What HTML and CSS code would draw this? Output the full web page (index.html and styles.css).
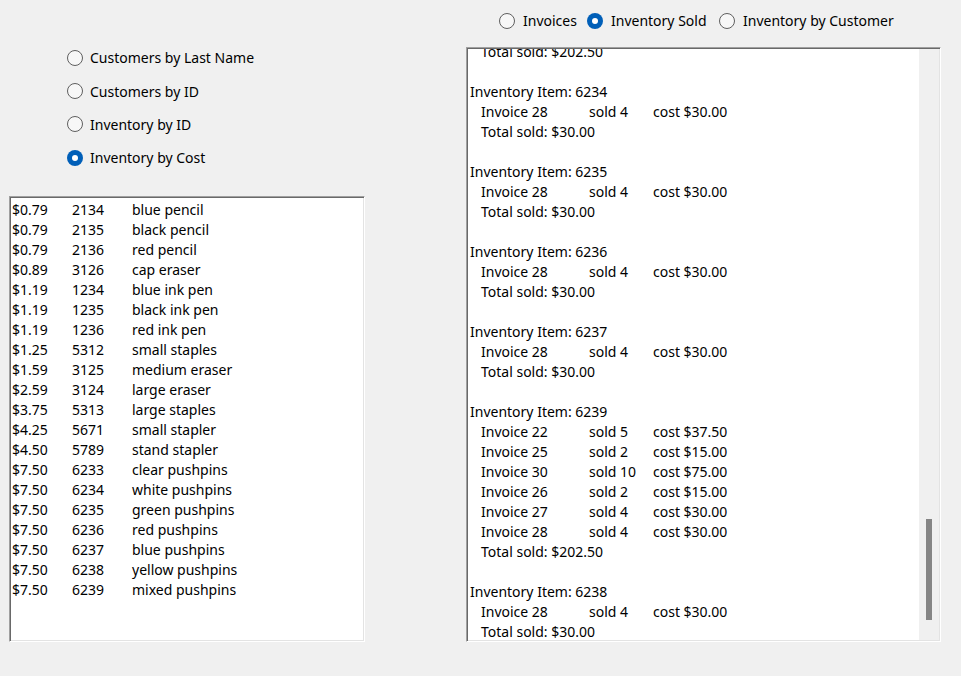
FILE: index.html
```html
<!DOCTYPE html>
<html>
<head>
<meta charset="utf-8">
<link rel="stylesheet" href="styles.css">
</head>
<body>
<div class="app">
  <div class="left">
    <div class="radios">
      <label class="radio"><span class="dot"></span><span>Customers by Last Name</span></label>
      <label class="radio"><span class="dot"></span><span>Customers by ID</span></label>
      <label class="radio"><span class="dot"></span><span>Inventory by ID</span></label>
      <label class="radio"><span class="dot checked"></span><span>Inventory by Cost</span></label>
    </div>
    <div class="listbox">
      <div class="row"><span class="c1">$0.79</span><span class="c2">2134</span><span>blue pencil</span></div>
      <div class="row"><span class="c1">$0.79</span><span class="c2">2135</span><span>black pencil</span></div>
      <div class="row"><span class="c1">$0.79</span><span class="c2">2136</span><span>red pencil</span></div>
      <div class="row"><span class="c1">$0.89</span><span class="c2">3126</span><span>cap eraser</span></div>
      <div class="row"><span class="c1">$1.19</span><span class="c2">1234</span><span>blue ink pen</span></div>
      <div class="row"><span class="c1">$1.19</span><span class="c2">1235</span><span>black ink pen</span></div>
      <div class="row"><span class="c1">$1.19</span><span class="c2">1236</span><span>red ink pen</span></div>
      <div class="row"><span class="c1">$1.25</span><span class="c2">5312</span><span>small staples</span></div>
      <div class="row"><span class="c1">$1.59</span><span class="c2">3125</span><span>medium eraser</span></div>
      <div class="row"><span class="c1">$2.59</span><span class="c2">3124</span><span>large eraser</span></div>
      <div class="row"><span class="c1">$3.75</span><span class="c2">5313</span><span>large staples</span></div>
      <div class="row"><span class="c1">$4.25</span><span class="c2">5671</span><span>small stapler</span></div>
      <div class="row"><span class="c1">$4.50</span><span class="c2">5789</span><span>stand stapler</span></div>
      <div class="row"><span class="c1">$7.50</span><span class="c2">6233</span><span>clear pushpins</span></div>
      <div class="row"><span class="c1">$7.50</span><span class="c2">6234</span><span>white pushpins</span></div>
      <div class="row"><span class="c1">$7.50</span><span class="c2">6235</span><span>green pushpins</span></div>
      <div class="row"><span class="c1">$7.50</span><span class="c2">6236</span><span>red pushpins</span></div>
      <div class="row"><span class="c1">$7.50</span><span class="c2">6237</span><span>blue pushpins</span></div>
      <div class="row"><span class="c1">$7.50</span><span class="c2">6238</span><span>yellow pushpins</span></div>
      <div class="row"><span class="c1">$7.50</span><span class="c2">6239</span><span>mixed pushpins</span></div>
    </div>
  </div>
  <div class="right">
    <div class="toprow">
      <label class="radio w1"><span class="dot"></span><span>Invoices</span></label>
      <label class="radio w2"><span class="dot checked"></span><span>Inventory Sold</span></label>
      <label class="radio"><span class="dot"></span><span>Inventory by Customer</span></label>
    </div>
    <div class="textbox">
      <div class="viewport">
        <div class="content">
          <div class="line ind">Total sold: $202.50</div>
          <div class="line"></div>
          <div class="line">Inventory Item: 6234</div>
          <div class="line ind"><span class="k1">Invoice 28</span><span class="k2">sold 4</span><span>cost $30.00</span></div>
          <div class="line ind">Total sold: $30.00</div>
          <div class="line"></div>
          <div class="line">Inventory Item: 6235</div>
          <div class="line ind"><span class="k1">Invoice 28</span><span class="k2">sold 4</span><span>cost $30.00</span></div>
          <div class="line ind">Total sold: $30.00</div>
          <div class="line"></div>
          <div class="line">Inventory Item: 6236</div>
          <div class="line ind"><span class="k1">Invoice 28</span><span class="k2">sold 4</span><span>cost $30.00</span></div>
          <div class="line ind">Total sold: $30.00</div>
          <div class="line"></div>
          <div class="line">Inventory Item: 6237</div>
          <div class="line ind"><span class="k1">Invoice 28</span><span class="k2">sold 4</span><span>cost $30.00</span></div>
          <div class="line ind">Total sold: $30.00</div>
          <div class="line"></div>
          <div class="line">Inventory Item: 6239</div>
          <div class="line ind"><span class="k1">Invoice 22</span><span class="k2">sold 5</span><span>cost $37.50</span></div>
          <div class="line ind"><span class="k1">Invoice 25</span><span class="k2">sold 2</span><span>cost $15.00</span></div>
          <div class="line ind"><span class="k1">Invoice 30</span><span class="k2">sold 10</span><span>cost $75.00</span></div>
          <div class="line ind"><span class="k1">Invoice 26</span><span class="k2">sold 2</span><span>cost $15.00</span></div>
          <div class="line ind"><span class="k1">Invoice 27</span><span class="k2">sold 4</span><span>cost $30.00</span></div>
          <div class="line ind"><span class="k1">Invoice 28</span><span class="k2">sold 4</span><span>cost $30.00</span></div>
          <div class="line ind">Total sold: $202.50</div>
          <div class="line"></div>
          <div class="line">Inventory Item: 6238</div>
          <div class="line ind"><span class="k1">Invoice 28</span><span class="k2">sold 4</span><span>cost $30.00</span></div>
          <div class="line ind">Total sold: $30.00</div>
        </div>
      </div>
      <div class="scrollbar">
        <div class="thumb" style="margin-top:470px;height:101px"></div>
      </div>
    </div>
  </div>
</div>
</body>
</html>
```
FILE: styles.css
```css
html, body {
  margin: 0;
  padding: 0;
  background: #f0f0f0;
}
body {
  font-family: "Segoe UI", "Noto Sans", "Open Sans", sans-serif;
  font-size: 14px;
  color: #000;
}
.app {
  display: flex;
  width: 961px;
  height: 676px;
}
.left {
  width: 356px;
  margin-left: 9px;
  display: flex;
  flex-direction: column;
  padding-top: 41px;
}
.radios {
  display: flex;
  flex-direction: column;
  padding-left: 58px;
}
.radios .radio {
  height: 33.4px;
  gap: 7px;
}
.radio {
  display: flex;
  align-items: center;
  gap: 8px;
  white-space: nowrap;
}
.dot {
  box-sizing: border-box;
  width: 16px;
  height: 16px;
  border-radius: 50%;
  border: 1px solid #5f5f5f;
  background: #f7f7f7;
  flex: none;
  display: flex;
  align-items: center;
  justify-content: center;
}
.dot.checked {
  border: none;
  background: #005fb8;
}
.dot.checked::after {
  content: "";
  width: 6px;
  height: 6px;
  border-radius: 50%;
  background: #fff;
}
.listbox {
  box-sizing: border-box;
  margin-top: 21.4px;
  height: 446px;
  background: #fff;
  border: 1px solid;
  border-color: #a0a0a0 #ffffff #ffffff #a0a0a0;
  box-shadow: inset 1px 1px 0 #696969, inset -1px -1px 0 #e3e3e3;
  padding: 3px 2px 2px 2px;
}
.row {
  display: flex;
  height: 20px;
  line-height: 20px;
  white-space: nowrap;
}
.c1, .c2 {
  width: 60px;
  flex: none;
}
.right {
  margin-left: 101px;
  width: 475px;
  display: flex;
  flex-direction: column;
}
.toprow {
  height: 47px;
  box-sizing: border-box;
  padding: 0 0 6px 33px;
  display: flex;
  align-items: center;
}
.w1 { width: 88px; flex: none; }
.w2 { width: 132px; flex: none; }
.textbox {
  box-sizing: border-box;
  height: 595px;
  background: #fff;
  border: 1px solid;
  border-color: #a0a0a0 #ffffff #ffffff #a0a0a0;
  box-shadow: inset 1px 1px 0 #696969, inset -1px -1px 0 #e3e3e3;
  padding: 1px;
  display: flex;
}
.viewport {
  flex: 1;
  overflow: hidden;
  padding-left: 2px;
}
.content {
  margin-top: -7px;
}
.line {
  height: 20px;
  line-height: 20px;
  white-space: nowrap;
  display: flex;
}
.line.ind {
  padding-left: 11px;
}
.k1 { width: 108px; flex: none; }
.k2 { width: 64px; flex: none; }
.scrollbar {
  width: 20px;
  flex: none;
  background: #f0f0f0;
  display: flex;
  flex-direction: column;
  align-items: center;
}
.thumb {
  width: 6px;
  background: #858585;
}
```
